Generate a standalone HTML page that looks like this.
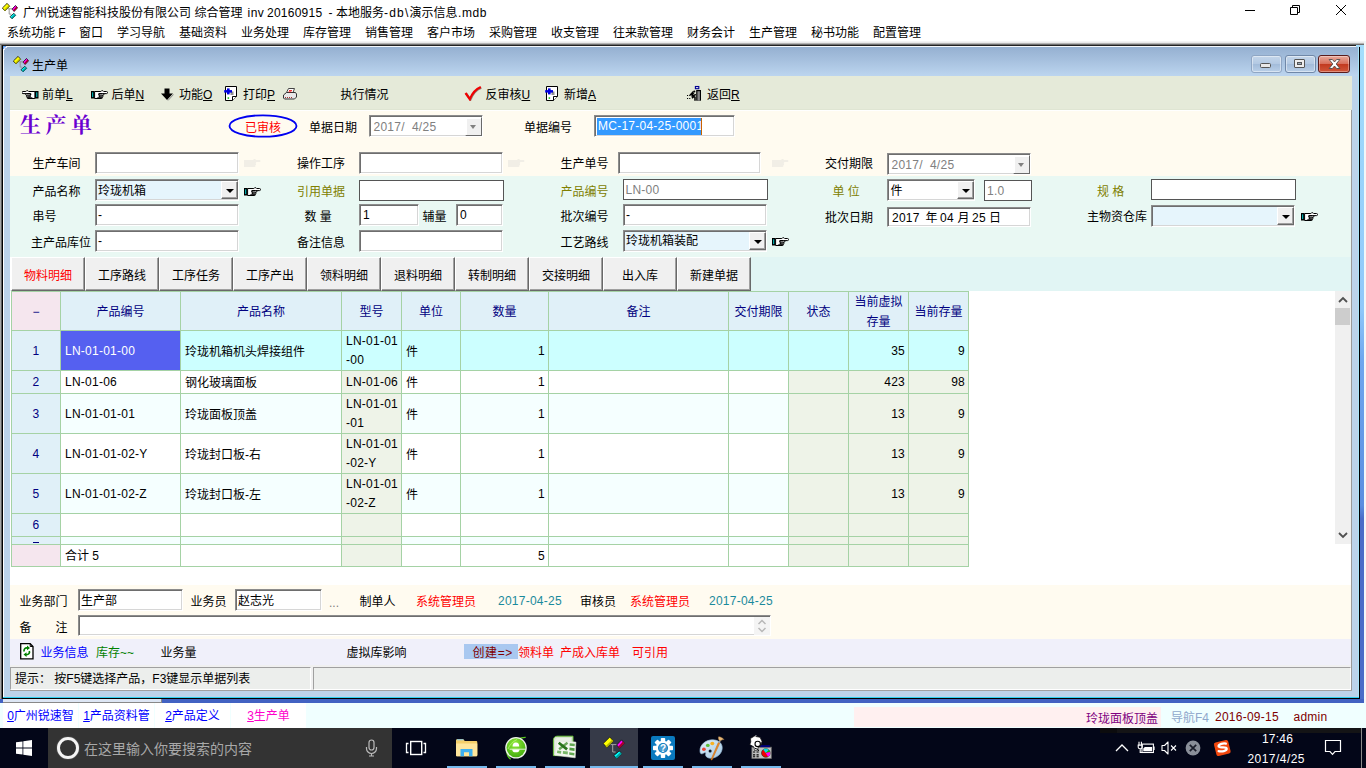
<!DOCTYPE html>
<html lang="zh-CN"><head><meta charset="utf-8"><title>生产单</title>
<style>
*{box-sizing:border-box;margin:0;padding:0}
html,body{width:1366px;height:768px;overflow:hidden;background:#fff}
body{position:relative;font-family:"Liberation Sans","Noto Sans CJK SC",sans-serif;font-size:12px;color:#000}
div,svg,span.a{position:absolute}
.t{white-space:nowrap;font-size:12px}
.ar{white-space:nowrap;font-size:12px;font-family:"Liberation Sans","Noto Sans CJK SC",sans-serif;letter-spacing:.25px}
u{text-decoration:underline}
.in{background:#fff;border:1px solid;border-color:#8c8c8c #fff #fff #8c8c8c;box-shadow:inset 1px 1px 0 #6e6e6e,inset -1px -1px 0 #d6d6d6}
.fl{background:#fff;border:1px solid #555}
.cb{background:#f0f0f0;border:1px solid;border-color:#fff #696969 #696969 #fff;box-shadow:inset -1px -1px 0 #a0a0a0}
  .cb:after{content:"";position:absolute;left:4px;top:7px;border:4px solid transparent;border-top:4px solid #000;border-bottom:0}
.tb{background:#f0f0f0;border:1px solid;border-color:#fff #696969 #696969 #fff;box-shadow:inset -1px -1px 0 #a0a0a0;text-align:center;line-height:37px;white-space:nowrap}
.ol{color:#808000}
.rd{color:#f00}
</style></head>
<body>
<svg style="left:2px;top:3px" width="16" height="16" viewBox="0.700 2.500 22.300 22.300"><path d="M8.500 10.600H14.700M10.700 10.600V18H13.600" fill="none" stroke="#909090" stroke-width="1.300"/><g stroke="#111" stroke-width="1.100" stroke-linejoin="round"><path d="M7.800 3l3.600 4-6.600 6.600L1.200 9.500z" fill="#ffff00"/><path d="M11.400 7l-6.600 6.600-1.200-1.300 6.600-6.600z" fill="#b4b400" stroke="none"/><path d="M19.500 5.900l2.900 3.300-4.800 5.100L14.700 11z" fill="#ff00ff"/><path d="M22.400 9.200l-4.800 5.100-1.450-1.650 4.800-5.100z" fill="#a80028" stroke="none"/><path d="M17.300 16.900l2.500 2.900-5.100 4.700-2.900-2.900z" fill="#00ffff"/><path d="M19.800 19.800l-5.100 4.700-1.450-1.450 5.100-4.700z" fill="#00a0a0" stroke="none"/></g></svg>
<div class="t" style="left:23px;top:5.0px;height:16px;line-height:16px;">广州锐速智能科技股份有限公司</div>
<div class="t" style="left:194.5px;top:5.0px;height:16px;line-height:16px;">综合管理</div>
<div class="t" style="left:247.5px;top:5.0px;height:16px;line-height:16px;letter-spacing:.5px">inv</div>
<div class="t" style="left:267px;top:5.0px;height:16px;line-height:16px;letter-spacing:.25px">20160915</div>
<div class="t" style="left:328.5px;top:5.0px;height:16px;line-height:16px;">-</div>
<div class="t" style="left:336px;top:5.0px;height:16px;line-height:16px;">本地服务</div>
<div class="t" style="left:384px;top:5.0px;height:16px;line-height:16px;letter-spacing:1.2px">-db\</div>
<div class="t" style="left:409.5px;top:5.0px;height:16px;line-height:16px;">演示信息</div>
<div class="t" style="left:458px;top:5.0px;height:16px;line-height:16px;letter-spacing:.6px">.mdb</div>
<svg style="left:1230px;top:0" width="136" height="22" viewBox="0 0 136 22"><g fill="none" stroke="#000" stroke-width="1"><path d="M15 10.5h10"/><path d="M60.5 7.5h7v7h-7zM62.5 7.5v-2h7v7h-2"/><path d="M106 5l10 10M116 5l-10 10"/></g></svg>
<div class="t" style="left:7px;top:25.4px;height:16px;line-height:16px;">系统功能 F</div>
<div class="t" style="left:79px;top:25.4px;height:16px;line-height:16px;">窗口</div>
<div class="t" style="left:117px;top:25.4px;height:16px;line-height:16px;">学习导航</div>
<div class="t" style="left:179px;top:25.4px;height:16px;line-height:16px;">基础资料</div>
<div class="t" style="left:241px;top:25.4px;height:16px;line-height:16px;">业务处理</div>
<div class="t" style="left:303px;top:25.4px;height:16px;line-height:16px;">库存管理</div>
<div class="t" style="left:365px;top:25.4px;height:16px;line-height:16px;">销售管理</div>
<div class="t" style="left:427px;top:25.4px;height:16px;line-height:16px;">客户市场</div>
<div class="t" style="left:489px;top:25.4px;height:16px;line-height:16px;">采购管理</div>
<div class="t" style="left:551px;top:25.4px;height:16px;line-height:16px;">收支管理</div>
<div class="t" style="left:613px;top:25.4px;height:16px;line-height:16px;">往来款管理</div>
<div class="t" style="left:687px;top:25.4px;height:16px;line-height:16px;">财务会计</div>
<div class="t" style="left:749px;top:25.4px;height:16px;line-height:16px;">生产管理</div>
<div class="t" style="left:811px;top:25.4px;height:16px;line-height:16px;">秘书功能</div>
<div class="t" style="left:873px;top:25.4px;height:16px;line-height:16px;">配置管理</div>
<div style="left:0px;top:41px;width:1366px;height:1px;background:#f4f4f4"></div>
<div style="left:0px;top:42px;width:1366px;height:1px;background:#eaeaea"></div>
<div style="left:0px;top:43px;width:1366px;height:1px;background:#b4b4b4"></div>
<div style="left:0px;top:44px;width:1366px;height:659px;background:#bcd3ea"></div>
<div style="left:0px;top:44px;width:1364px;height:1px;background:#707070"></div>
<div style="left:0px;top:45px;width:1357px;height:1px;background:#222"></div>
<div style="left:0px;top:45px;width:1px;height:658px;background:#a8a8a8"></div>
<div style="left:1px;top:45px;width:1px;height:658px;background:#606060"></div>
<div style="left:2px;top:45px;width:1px;height:654px;background:#000"></div>
<div style="left:3px;top:46px;width:1px;height:651px;background:#fff"></div>
<div style="left:1358px;top:47px;width:1px;height:650px;background:#a8e4f8"></div>
<div style="left:1359px;top:47px;width:1px;height:652px;background:#000"></div>
<div style="left:1360px;top:45px;width:4px;height:658px;background:linear-gradient(#a4defc,#90c8fa 40%,#6ea6ee 48%,#5a8ee0 70%,#4a6cc8 72%,#4a6cc8)"></div>
<div style="left:1364px;top:41px;width:2px;height:662px;background:#f2f6f8"></div>
<div style="left:1356px;top:45px;width:3px;height:2px;background:#a4defc"></div>
<div style="left:3px;top:697px;width:1356px;height:1px;background:#30d0f0"></div>
<div style="left:2px;top:698px;width:1358px;height:1px;background:#000"></div>
<div style="left:0px;top:699px;width:1364px;height:4px;background:#4262c2"></div>
<div style="left:3px;top:699px;width:159px;height:4px;background:#dde6f4;border-bottom:1px solid #888;border-right:1px solid #888"></div>
<div style="left:4px;top:47px;width:1354px;height:29px;background:linear-gradient(#95b0d1,#a6c0de 45%,#bcd5ef)"></div>
<div style="left:4px;top:46px;width:1352px;height:1px;background:#f4f8fc"></div>
<div style="left:2px;top:45px;width:4px;height:4px;background:#5e9ef0;border-top:1px solid #222;border-left:1px solid #000"></div>
<div style="left:4px;top:47px;width:3px;height:3px;background:#9bb5d5;border-top:1px solid #eef;border-left:1px solid #eef;border-radius:2px 0 0 0"></div>
<svg style="left:12.5px;top:56px" width="16" height="16" viewBox="0.700 2.500 22.300 22.300"><path d="M8.500 10.600H14.700M10.700 10.600V18H13.600" fill="none" stroke="#909090" stroke-width="1.300"/><g stroke="#111" stroke-width="1.100" stroke-linejoin="round"><path d="M7.800 3l3.600 4-6.600 6.600L1.200 9.500z" fill="#ffff00"/><path d="M11.400 7l-6.600 6.600-1.200-1.300 6.600-6.600z" fill="#b4b400" stroke="none"/><path d="M19.500 5.900l2.900 3.300-4.800 5.100L14.700 11z" fill="#ff00ff"/><path d="M22.400 9.200l-4.800 5.100-1.450-1.650 4.800-5.100z" fill="#a80028" stroke="none"/><path d="M17.300 16.900l2.500 2.900-5.100 4.700-2.900-2.900z" fill="#00ffff"/><path d="M19.800 19.800l-5.100 4.700-1.450-1.450 5.100-4.700z" fill="#00a0a0" stroke="none"/></g></svg>
<div class="t" style="left:32px;top:57.5px;height:16px;line-height:16px;">生产单</div>
<div style="left:1250.5px;top:55px;width:31px;height:18px;border:1px solid #8fa6c4;border-radius:3px;background:linear-gradient(#c4d6ea,#b3c9e3 48%,#a3bcda 52%,#b9cfe8);box-shadow:inset 0 0 0 1px rgba(255,255,255,.45)"></div>
<div style="left:1260px;top:63px;width:11px;height:5px;border:1px solid #555;border-radius:1.500px;background:#e8e8e8"></div>
<div style="left:1284.5px;top:55px;width:31px;height:18px;border:1px solid #7088a8;border-radius:3px;background:linear-gradient(#c4d6ea,#b3c9e3 48%,#a3bcda 52%,#b9cfe8);box-shadow:inset 0 0 0 1px rgba(255,255,255,.45)"></div>
<div style="left:1294px;top:59px;width:11px;height:9px;border:1px solid #555;border-radius:1px;background:#eee"></div>
<div style="left:1297px;top:62px;width:5px;height:3px;border:1px solid #555;background:#9ab"></div>
<div style="left:1318px;top:55px;width:32px;height:18px;border:1px solid #5a1c1c;border-radius:3px;background:linear-gradient(#e9a99b,#d8705c 48%,#c23a20 52%,#d0563a);box-shadow:inset 0 0 0 1px rgba(255,255,255,.35)"></div>
<svg style="left:1326.500px;top:58px" width="15" height="12" viewBox="0 0 14 12" preserveAspectRatio="none"><path d="M2 1.5h3l2 2.5 2-2.5h3L8.6 6 12 10.5H9L7 8l-2 2.5H2L5.4 6z" fill="#fff" stroke="#444" stroke-width=".8"/></svg>
<div style="left:10px;top:76px;width:1342px;height:34px;background:#e5ead9;border-bottom:1px solid #dfe5d3"></div>
<div style="left:10px;top:110px;width:1341px;height:1px;background:#fff"></div>
<div style="left:10px;top:111px;width:1341px;height:65px;background:#fffbf0"></div>
<div style="left:10px;top:176px;width:1341px;height:81px;background:#e9f8f3"></div>
<div style="left:10px;top:257px;width:1341px;height:34px;background:#e1f5f4"></div>
<div style="left:10px;top:291px;width:1341px;height:294px;background:#fff"></div>
<div style="left:10px;top:585px;width:1341px;height:54px;background:#fffbf0"></div>
<div style="left:10px;top:639px;width:1341px;height:26px;background:#f0f0fa"></div>
<div style="left:10px;top:665px;width:1342px;height:25px;background:#f0f0f0"></div>
<div style="left:10px;top:690px;width:1342px;height:1px;background:#a0a0a0"></div>
<div style="left:1351px;top:110px;width:1px;height:580px;background:#9a9a9a"></div>
<svg style="left:22px;top:89.5px" width="17" height="10" viewBox="0 0 17 10"><g transform="translate(16.500,0) scale(-1,1)"><rect x="0" y="1" width="3.600" height="7.500" fill="#000"/><rect x="1.200" y="2.300" width="1" height="4.800" fill="#00d0d0"/><path d="M3.600 1.500H9.800c.6-1.100 2.300-1.100 2.900 0h2.800c1.500 0 1.500 2.100 0 2.100H11.800c1.400 0 1.400 1.700 0 1.700h-.6c1.300 0 1.300 1.600 0 1.600h-.7c1.200 0 1.200 1.600 0 1.600H3.600z" fill="#fff" stroke="#000" stroke-width="1" stroke-linejoin="round"/><path d="M8.300 3.600h3.500M8.800 5.300h2.400M8.800 6.900h1.700M8.300 3.600c-.9 0-.9 1.700.5 1.700M8.800 5.300c-.9 0-.9 1.600 0 1.600" fill="none" stroke="#000" stroke-width="1.100"/><path d="M4.500 8.500h6l.8-1.200H7z" fill="#000"/></g></svg>
<div class="t" style="left:42px;top:87.0px;height:16px;line-height:16px;">前单<u>L</u></div>
<svg style="left:91px;top:89.5px" width="17" height="10" viewBox="0 0 17 10"><rect x="0" y="1" width="3.600" height="7.500" fill="#000"/><rect x="1.200" y="2.300" width="1" height="4.800" fill="#00d0d0"/><path d="M3.600 1.500H9.800c.6-1.100 2.300-1.100 2.900 0h2.800c1.500 0 1.500 2.100 0 2.100H11.800c1.400 0 1.400 1.700 0 1.700h-.6c1.300 0 1.300 1.600 0 1.600h-.7c1.200 0 1.200 1.600 0 1.600H3.600z" fill="#fff" stroke="#000" stroke-width="1" stroke-linejoin="round"/><path d="M8.300 3.600h3.500M8.800 5.300h2.400M8.800 6.900h1.700M8.300 3.600c-.9 0-.9 1.700.5 1.700M8.800 5.300c-.9 0-.9 1.600 0 1.600" fill="none" stroke="#000" stroke-width="1.100"/><path d="M4.500 8.500h6l.8-1.200H7z" fill="#000"/></svg>
<div class="t" style="left:111.5px;top:87.0px;height:16px;line-height:16px;">后单<u>N</u></div>
<svg style="left:160px;top:88px" width="14" height="13" viewBox="0 0 14 13"><path d="M4.500 .5h5v5h3.500L7 12 1 5.500h3.500z" fill="#000"/><path d="M8 12.500l5.500-6" stroke="#888" stroke-width="1" fill="none"/></svg>
<div class="t" style="left:179px;top:87.0px;height:16px;line-height:16px;">功能<u>O</u></div>
<svg style="left:223px;top:86px" width="15" height="16" viewBox="0 0 15 16"><path d="M2.500 .5H13.500V10.500L9.500 14.500H2.500Z" fill="#fff" stroke="#000" stroke-width="1"/><path d="M9.500 14.500V10.500H13.500" fill="#fff" stroke="#000" stroke-width="1"/><rect x="7.500" y="5.500" width="3" height="3.500" fill="#909090"/><rect x="4" y="2.400" width="2.600" height="6" fill="#0000e0"/><rect x="1.200" y="4.100" width="7.800" height="2.500" fill="#0000e0"/><rect x="4.600" y="11.300" width="1.500" height="1.500" fill="#00c000"/></svg>
<div class="t" style="left:243px;top:87.0px;height:16px;line-height:16px;">打印<u>P</u></div>
<svg style="left:282px;top:88px" width="16" height="12" viewBox="0 0 16 12"><path d="M4.500 4.500l2-4h6l-1.500 4" fill="#fff" stroke="#444" stroke-width="1"/><path d="M1.500 7l3-2.500h9l1 1.500v3l-2 2h-10l-1-1z" fill="#e8e8e8" stroke="#333" stroke-width="1"/><path d="M7 2.500h3M6.500 3.800h3" stroke="#e00" stroke-width=".8"/><path d="M3 9.500h8" stroke="#a33" stroke-width="1" stroke-dasharray="1 1"/></svg>
<div class="t" style="left:340.5px;top:87.0px;height:16px;line-height:16px;">执行情况</div>
<svg style="left:464px;top:86px" width="18" height="15" viewBox="0 0 18 15"><path d="M2.300 7.700l4.200 5.800C8.800 8 12.500 3.500 17.300 1.800" fill="none" stroke="#400" stroke-width="2" opacity=".5"/><path d="M1.500 7l4.300 6.200C8 7.500 12 3 16.800 1" fill="none" stroke="#f00000" stroke-width="2.200"/></svg>
<div class="t" style="left:485.5px;top:87.0px;height:16px;line-height:16px;">反审核<u>U</u></div>
<svg style="left:543.5px;top:86px" width="15" height="16" viewBox="0 0 15 16"><path d="M2.500 .5H13.500V10.500L9.500 14.500H2.500Z" fill="#fff" stroke="#000" stroke-width="1"/><path d="M9.500 14.500V10.500H13.500" fill="#fff" stroke="#000" stroke-width="1"/><rect x="7.500" y="5.500" width="3" height="3.500" fill="#909090"/><rect x="4" y="2.400" width="2.600" height="6" fill="#0000e0"/><rect x="1.200" y="4.100" width="7.800" height="2.500" fill="#0000e0"/><rect x="4.600" y="11.300" width="1.500" height="1.500" fill="#00c000"/></svg>
<div class="t" style="left:564px;top:87.0px;height:16px;line-height:16px;">新增<u>A</u></div>
<svg style="left:686px;top:85px" width="16" height="17" viewBox="0 0 16 17"><rect x="9.400" y="1.500" width="3.400" height="2.200" fill="#dde" stroke="#000090" stroke-width="1.100"/><rect x="10.200" y="5" width="4.800" height="10.700" fill="#000"/><rect x="11.400" y="6.200" width="2.500" height="9.500" fill="#8a8a8a"/><path d="M7.500 6.600l-2 2.200 2.400 2-1.800 2.400M7.500 8l-1.500 3 3 1.300v3.500M5.500 8.800l-1.500 1.300M8.300 9.500l1.500.5" fill="none" stroke="#000" stroke-width="1.500"/><circle cx="8.300" cy="6.500" r="1.100" fill="#000"/><path d="M1 10.500h3.500M1 13.500h3.500" stroke="#000" stroke-width="1.100" stroke-dasharray="1.100 1.100"/></svg>
<div class="t" style="left:707px;top:87.0px;height:16px;line-height:16px;">返回<u>R</u></div>
<div class="t" style="left:20px;top:110px;height:30px;line-height:30px;font-family:'Liberation Serif','Noto Serif CJK SC',serif;font-size:21px;font-weight:700;color:#6a00d0;letter-spacing:4.5px">生产单</div>
<svg style="left:228px;top:114px" width="70" height="24" viewBox="0 0 70 24"><ellipse cx="35" cy="12" rx="33.500" ry="10.700" fill="none" stroke="#0000f0" stroke-width="1.800"/></svg>
<div class="t" style="left:245px;top:120.0px;height:16px;line-height:16px;color:#f00">已审核</div>
<div class="t" style="left:309px;top:120.0px;height:16px;line-height:16px;">单据日期</div>
<div class="in" style="left:369px;top:115px;width:114px;height:22px;"></div>
<div style="left:465px;top:117px;width:17px;height:19px;background:#f0f0f0;border:1px solid;border-color:#fff #696969 #696969 #fff;box-shadow:inset 1px 1px 0 #fff"></div>
<div style="left:470px;top:125.0px;border:3.500px solid transparent;border-top:4px solid #808080;border-bottom:0;width:0;height:0"></div>
<div class="ar" style="left:373.5px;top:118.5px;height:16px;line-height:16px;color:#808080;white-space:pre">2017/  4/25</div>
<div class="t" style="left:524px;top:120.0px;height:16px;line-height:16px;">单据编号</div>
<div class="in" style="left:594px;top:115px;width:141px;height:22px;"></div>
<div style="left:597px;top:118px;width:105px;height:17px;background:#3399ff"></div>
<div class="ar" style="left:598px;top:118.0px;height:16px;line-height:16px;color:#fff">MC-17-04-25-0001</div>
<div style="left:701px;top:118px;width:1px;height:17px;background:#c86400"></div>
<div class="t" style="left:32.5px;top:156.0px;height:16px;line-height:16px;">生产车间</div>
<div class="in" style="left:95px;top:152px;width:144px;height:22px;"></div>
<svg style="left:244px;top:157.5px" width="17" height="10" viewBox="0 0 17 10"><path d="M0 2h9c.8-1.200 2.500-1.200 3 0h3.500c1.300 0 1.300 2 0 2H11.500c1 0 1 1.700 0 1.700 .9 0 .9 1.600-.5 1.600 .8 0 .8 1.600-.5 1.600H0z" fill="#f1eee6"/></svg>
<div class="t" style="left:32.5px;top:184.0px;height:16px;line-height:16px;">产品名称</div>
<div class="in" style="left:95px;top:179px;width:144px;height:22px;background:#e6f5fc"></div>
<div class="cb" style="left:221px;top:181px;width:17px;height:18px;"></div>
<div class="t" style="left:98px;top:183.0px;height:16px;line-height:16px;">玲珑机箱</div>
<svg style="left:244px;top:186.5px" width="17" height="10" viewBox="0 0 17 10"><rect x="0" y="1" width="3.600" height="7.500" fill="#000"/><rect x="1.200" y="2.300" width="1" height="4.800" fill="#00d0d0"/><path d="M3.600 1.500H9.800c.6-1.100 2.300-1.100 2.900 0h2.800c1.500 0 1.500 2.100 0 2.100H11.800c1.400 0 1.400 1.700 0 1.700h-.6c1.300 0 1.300 1.600 0 1.600h-.7c1.200 0 1.200 1.600 0 1.600H3.600z" fill="#fff" stroke="#000" stroke-width="1" stroke-linejoin="round"/><path d="M8.300 3.600h3.500M8.800 5.300h2.400M8.800 6.900h1.700M8.300 3.600c-.9 0-.9 1.700.5 1.700M8.800 5.300c-.9 0-.9 1.600 0 1.600" fill="none" stroke="#000" stroke-width="1.100"/><path d="M4.500 8.500h6l.8-1.200H7z" fill="#000"/></svg>
<div class="t" style="left:32.5px;top:209.0px;height:16px;line-height:16px;">串号</div>
<div class="in" style="left:95px;top:204px;width:144px;height:22px;"></div>
<div class="t" style="left:98px;top:207.0px;height:16px;line-height:16px;">-</div>
<div class="t" style="left:31px;top:234.5px;height:16px;line-height:16px;">主产品库位</div>
<div class="in" style="left:95px;top:230px;width:144px;height:22px;"></div>
<div class="t" style="left:98px;top:233.0px;height:16px;line-height:16px;">-</div>
<div class="t" style="left:297px;top:156.0px;height:16px;line-height:16px;">操作工序</div>
<div class="in" style="left:359px;top:152px;width:144px;height:22px;"></div>
<svg style="left:508px;top:157.5px" width="17" height="10" viewBox="0 0 17 10"><path d="M0 2h9c.8-1.200 2.500-1.200 3 0h3.500c1.300 0 1.300 2 0 2H11.500c1 0 1 1.700 0 1.700 .9 0 .9 1.600-.5 1.600 .8 0 .8 1.600-.5 1.600H0z" fill="#f1eee6"/></svg>
<div class="t ol" style="left:297px;top:184.0px;height:16px;line-height:16px;">引用单据</div>
<div class="fl" style="left:359px;top:180px;width:145px;height:21px;"></div>
<div class="t" style="left:304.5px;top:209.0px;height:16px;line-height:16px;">数 量</div>
<div class="in" style="left:359px;top:204px;width:60px;height:22px;"></div>
<div class="ar" style="left:363px;top:207.0px;height:16px;line-height:16px;">1</div>
<div class="t" style="left:422.5px;top:209.0px;height:16px;line-height:16px;">辅量</div>
<div class="in" style="left:456px;top:204px;width:47px;height:22px;"></div>
<div class="ar" style="left:460px;top:207.0px;height:16px;line-height:16px;">0</div>
<div class="t" style="left:297px;top:234.5px;height:16px;line-height:16px;">备注信息</div>
<div class="in" style="left:359px;top:230px;width:144px;height:22px;"></div>
<div class="t" style="left:560.5px;top:156.0px;height:16px;line-height:16px;">生产单号</div>
<div class="in" style="left:618px;top:152px;width:143px;height:22px;"></div>
<svg style="left:772px;top:157.5px" width="17" height="10" viewBox="0 0 17 10"><path d="M0 2h9c.8-1.200 2.500-1.200 3 0h3.500c1.300 0 1.300 2 0 2H11.500c1 0 1 1.700 0 1.700 .9 0 .9 1.600-.5 1.600 .8 0 .8 1.600-.5 1.600H0z" fill="#f1eee6"/></svg>
<div class="t ol" style="left:560.5px;top:184.0px;height:16px;line-height:16px;">产品编号</div>
<div class="fl" style="left:623px;top:179px;width:145px;height:21px;"></div>
<div class="ar" style="left:625.5px;top:182.0px;height:16px;line-height:16px;color:#808080">LN-00</div>
<div class="t" style="left:560.5px;top:209.0px;height:16px;line-height:16px;">批次编号</div>
<div class="in" style="left:623px;top:204px;width:144px;height:22px;"></div>
<div class="t" style="left:626px;top:207.0px;height:16px;line-height:16px;">-</div>
<div class="t" style="left:560.5px;top:234.5px;height:16px;line-height:16px;">工艺路线</div>
<div class="in" style="left:623px;top:230px;width:144px;height:22px;background:#e6f5fc"></div>
<div class="cb" style="left:749px;top:232px;width:17px;height:18px;"></div>
<div class="t" style="left:626px;top:233.0px;height:16px;line-height:16px;">玲珑机箱装配</div>
<svg style="left:772px;top:236.5px" width="17" height="10" viewBox="0 0 17 10"><rect x="0" y="1" width="3.600" height="7.500" fill="#000"/><rect x="1.200" y="2.300" width="1" height="4.800" fill="#00d0d0"/><path d="M3.600 1.500H9.800c.6-1.100 2.300-1.100 2.900 0h2.800c1.500 0 1.500 2.100 0 2.100H11.800c1.400 0 1.400 1.700 0 1.700h-.6c1.300 0 1.300 1.600 0 1.600h-.7c1.200 0 1.200 1.600 0 1.600H3.600z" fill="#fff" stroke="#000" stroke-width="1" stroke-linejoin="round"/><path d="M8.300 3.600h3.500M8.800 5.300h2.400M8.800 6.900h1.700M8.300 3.600c-.9 0-.9 1.700.5 1.700M8.800 5.300c-.9 0-.9 1.600 0 1.600" fill="none" stroke="#000" stroke-width="1.100"/><path d="M4.500 8.500h6l.8-1.200H7z" fill="#000"/></svg>
<div class="t" style="left:825px;top:156.0px;height:16px;line-height:16px;">交付期限</div>
<div class="in" style="left:887px;top:153px;width:144px;height:22px;"></div>
<div style="left:1013px;top:155px;width:17px;height:19px;background:#f0f0f0;border:1px solid;border-color:#fff #696969 #696969 #fff;box-shadow:inset 1px 1px 0 #fff"></div>
<div style="left:1018px;top:163.0px;border:3.500px solid transparent;border-top:4px solid #808080;border-bottom:0;width:0;height:0"></div>
<div class="ar" style="left:891.5px;top:156.5px;height:16px;line-height:16px;color:#808080;white-space:pre">2017/  4/25</div>
<div class="t ol" style="left:832.5px;top:184.0px;height:16px;line-height:16px;">单 位</div>
<div class="in" style="left:887px;top:179px;width:88px;height:22px;"></div>
<div class="cb" style="left:957px;top:181px;width:17px;height:18px;"></div>
<div class="t" style="left:890.5px;top:183.0px;height:16px;line-height:16px;">件</div>
<div class="fl" style="left:984px;top:180px;width:48px;height:21px;"></div>
<div class="ar" style="left:987px;top:182.5px;height:16px;line-height:16px;color:#808080">1.0</div>
<div class="t" style="left:825px;top:209.5px;height:16px;line-height:16px;">批次日期</div>
<div class="in" style="left:887px;top:207px;width:144px;height:20px;"></div>
<div class="ar" style="left:892px;top:209.5px;height:16px;line-height:16px;">2017</div>
<div class="ar" style="left:925.5px;top:209.5px;height:16px;line-height:16px;">年</div>
<div class="ar" style="left:940px;top:209.5px;height:16px;line-height:16px;">04</div>
<div class="ar" style="left:957.5px;top:209.5px;height:16px;line-height:16px;">月</div>
<div class="ar" style="left:972px;top:209.5px;height:16px;line-height:16px;">25</div>
<div class="ar" style="left:989px;top:209.5px;height:16px;line-height:16px;">日</div>
<div class="t ol" style="left:1097px;top:184.0px;height:16px;line-height:16px;">规 格</div>
<div class="fl" style="left:1151px;top:179px;width:145px;height:21px;"></div>
<div class="t" style="left:1087px;top:209.0px;height:16px;line-height:16px;">主物资仓库</div>
<div class="in" style="left:1151px;top:205px;width:144px;height:22px;background:#e6f5fc"></div>
<div class="cb" style="left:1277px;top:207px;width:17px;height:18px;"></div>
<svg style="left:1301px;top:211.5px" width="17" height="10" viewBox="0 0 17 10"><rect x="0" y="1" width="3.600" height="7.500" fill="#000"/><rect x="1.200" y="2.300" width="1" height="4.800" fill="#00d0d0"/><path d="M3.600 1.500H9.800c.6-1.100 2.300-1.100 2.900 0h2.800c1.500 0 1.500 2.100 0 2.100H11.800c1.400 0 1.400 1.700 0 1.700h-.6c1.300 0 1.300 1.600 0 1.600h-.7c1.200 0 1.200 1.600 0 1.600H3.600z" fill="#fff" stroke="#000" stroke-width="1" stroke-linejoin="round"/><path d="M8.300 3.600h3.500M8.800 5.300h2.400M8.800 6.900h1.700M8.300 3.600c-.9 0-.9 1.700.5 1.700M8.800 5.300c-.9 0-.9 1.600 0 1.600" fill="none" stroke="#000" stroke-width="1.100"/><path d="M4.500 8.500h6l.8-1.200H7z" fill="#000"/></svg>
<div style="left:10px;top:257px;width:1px;height:33px;background:#fff"></div>
<div class="tb" style="left:11px;top:257px;width:74px;height:34px;color:#f00">物料明细</div>
<div class="tb" style="left:85px;top:257px;width:74px;height:34px;">工序路线</div>
<div class="tb" style="left:159px;top:257px;width:74px;height:34px;">工序任务</div>
<div class="tb" style="left:233px;top:257px;width:74px;height:34px;">工序产出</div>
<div class="tb" style="left:307px;top:257px;width:74px;height:34px;">领料明细</div>
<div class="tb" style="left:381px;top:257px;width:74px;height:34px;">退料明细</div>
<div class="tb" style="left:455px;top:257px;width:74px;height:34px;">转制明细</div>
<div class="tb" style="left:529px;top:257px;width:74px;height:34px;">交接明细</div>
<div class="tb" style="left:603px;top:257px;width:74px;height:34px;">出入库</div>
<div class="tb" style="left:677px;top:257px;width:74px;height:34px;">新建单据</div>
<div style="left:12px;top:291px;width:48px;height:39px;background:#f5e6ee;color:#000080;text-align:center;line-height:43px;white-space:nowrap;">−</div>
<div style="left:61px;top:291px;width:119px;height:39px;background:#e0f0f8;color:#000080;text-align:center;line-height:43px;white-space:nowrap;">产品编号</div>
<div style="left:181px;top:291px;width:160px;height:39px;background:#e0f0f8;color:#000080;text-align:center;line-height:43px;white-space:nowrap;">产品名称</div>
<div style="left:342px;top:291px;width:59px;height:39px;background:#e0f0f8;color:#000080;text-align:center;line-height:43px;white-space:nowrap;">型号</div>
<div style="left:402px;top:291px;width:58px;height:39px;background:#e0f0f8;color:#000080;text-align:center;line-height:43px;white-space:nowrap;">单位</div>
<div style="left:461px;top:291px;width:87px;height:39px;background:#e0f0f8;color:#000080;text-align:center;line-height:43px;white-space:nowrap;">数量</div>
<div style="left:549px;top:291px;width:179px;height:39px;background:#e0f0f8;color:#000080;text-align:center;line-height:43px;white-space:nowrap;">备注</div>
<div style="left:729px;top:291px;width:59px;height:39px;background:#e0f0f8;color:#000080;text-align:center;line-height:43px;white-space:nowrap;">交付期限</div>
<div style="left:789px;top:291px;width:59px;height:39px;background:#e0f0f8;color:#000080;text-align:center;line-height:43px;white-space:nowrap;">状态</div>
<div style="left:849px;top:291px;width:59px;height:39px;background:#e0f0f8;color:#000080;text-align:center;line-height:20px;white-space:nowrap;padding-top:1px;">当前虚拟<br>存量</div>
<div style="left:909px;top:291px;width:59px;height:39px;background:#e0f0f8;color:#000080;text-align:center;line-height:43px;white-space:nowrap;">当前存量</div>
<div class="ar" style="left:12px;top:331px;width:48px;height:39px;background:#e0f0f8;overflow:hidden;color:#000080;text-align:center;line-height:41px;">1</div>
<div class="ar" style="left:61px;top:331px;width:119px;height:39px;background:#5560f0;color:#fff;padding-left:4px;line-height:41px;">LN-01-01-00</div>
<div class="t" style="left:181px;top:331px;width:160px;height:39px;background:#ccffff;overflow:hidden;padding-left:4px;line-height:43px;">玲珑机箱机头焊接组件</div>
<div class="ar" style="left:342px;top:331px;width:59px;height:39px;background:#ccffff;overflow:hidden;padding-left:4px;line-height:19px;padding-top:0.5px;">LN-01-01<br>-00</div>
<div class="t" style="left:402px;top:331px;width:58px;height:39px;background:#ccffff;overflow:hidden;padding-left:4px;line-height:43px;">件</div>
<div class="ar" style="left:461px;top:331px;width:87px;height:39px;background:#ccffff;overflow:hidden;text-align:right;padding-right:3px;line-height:41px;">1</div>
<div class="t" style="left:549px;top:331px;width:179px;height:39px;background:#ccffff;overflow:hidden;padding-left:4px;line-height:43px;"></div>
<div class="t" style="left:729px;top:331px;width:59px;height:39px;background:#ccffff;overflow:hidden;padding-left:4px;line-height:43px;"></div>
<div class="t" style="left:789px;top:331px;width:59px;height:39px;background:#ccffff;overflow:hidden;padding-left:4px;line-height:43px;"></div>
<div class="ar" style="left:849px;top:331px;width:59px;height:39px;background:#ccffff;overflow:hidden;text-align:right;padding-right:3px;line-height:41px;">35</div>
<div class="ar" style="left:909px;top:331px;width:59px;height:39px;background:#ccffff;overflow:hidden;text-align:right;padding-right:3px;line-height:41px;">9</div>
<div class="ar" style="left:12px;top:371px;width:48px;height:22px;background:#e0f0f8;overflow:hidden;color:#000080;text-align:center;line-height:22px;">2</div>
<div class="ar" style="left:61px;top:371px;width:119px;height:22px;background:#fff;overflow:hidden;padding-left:4px;line-height:22px;">LN-01-06</div>
<div class="t" style="left:181px;top:371px;width:160px;height:22px;background:#fff;overflow:hidden;padding-left:4px;line-height:24px;">钢化玻璃面板</div>
<div class="ar" style="left:342px;top:371px;width:59px;height:22px;background:#eef3e8;overflow:hidden;padding-left:4px;line-height:22px;">LN-01-06</div>
<div class="t" style="left:402px;top:371px;width:58px;height:22px;background:#fff;overflow:hidden;padding-left:4px;line-height:24px;">件</div>
<div class="ar" style="left:461px;top:371px;width:87px;height:22px;background:#fff;overflow:hidden;text-align:right;padding-right:3px;line-height:22px;">1</div>
<div class="t" style="left:549px;top:371px;width:179px;height:22px;background:#fff;overflow:hidden;padding-left:4px;line-height:24px;"></div>
<div class="t" style="left:729px;top:371px;width:59px;height:22px;background:#fff;overflow:hidden;padding-left:4px;line-height:24px;"></div>
<div class="t" style="left:789px;top:371px;width:59px;height:22px;background:#eef3e8;overflow:hidden;padding-left:4px;line-height:24px;"></div>
<div class="ar" style="left:849px;top:371px;width:59px;height:22px;background:#eef3e8;overflow:hidden;text-align:right;padding-right:3px;line-height:22px;">423</div>
<div class="ar" style="left:909px;top:371px;width:59px;height:22px;background:#eef3e8;overflow:hidden;text-align:right;padding-right:3px;line-height:22px;">98</div>
<div class="ar" style="left:12px;top:394px;width:48px;height:39px;background:#e0f0f8;overflow:hidden;color:#000080;text-align:center;line-height:41px;">3</div>
<div class="ar" style="left:61px;top:394px;width:119px;height:39px;background:#f5ffff;overflow:hidden;padding-left:4px;line-height:41px;">LN-01-01-01</div>
<div class="t" style="left:181px;top:394px;width:160px;height:39px;background:#f5ffff;overflow:hidden;padding-left:4px;line-height:43px;">玲珑面板顶盖</div>
<div class="ar" style="left:342px;top:394px;width:59px;height:39px;background:#eef3e8;overflow:hidden;padding-left:4px;line-height:19px;padding-top:0.5px;">LN-01-01<br>-01</div>
<div class="t" style="left:402px;top:394px;width:58px;height:39px;background:#f5ffff;overflow:hidden;padding-left:4px;line-height:43px;">件</div>
<div class="ar" style="left:461px;top:394px;width:87px;height:39px;background:#f5ffff;overflow:hidden;text-align:right;padding-right:3px;line-height:41px;">1</div>
<div class="t" style="left:549px;top:394px;width:179px;height:39px;background:#f5ffff;overflow:hidden;padding-left:4px;line-height:43px;"></div>
<div class="t" style="left:729px;top:394px;width:59px;height:39px;background:#f5ffff;overflow:hidden;padding-left:4px;line-height:43px;"></div>
<div class="t" style="left:789px;top:394px;width:59px;height:39px;background:#eef3e8;overflow:hidden;padding-left:4px;line-height:43px;"></div>
<div class="ar" style="left:849px;top:394px;width:59px;height:39px;background:#eef3e8;overflow:hidden;text-align:right;padding-right:3px;line-height:41px;">13</div>
<div class="ar" style="left:909px;top:394px;width:59px;height:39px;background:#eef3e8;overflow:hidden;text-align:right;padding-right:3px;line-height:41px;">9</div>
<div class="ar" style="left:12px;top:434px;width:48px;height:39px;background:#e0f0f8;overflow:hidden;color:#000080;text-align:center;line-height:41px;">4</div>
<div class="ar" style="left:61px;top:434px;width:119px;height:39px;background:#fff;overflow:hidden;padding-left:4px;line-height:41px;">LN-01-01-02-Y</div>
<div class="t" style="left:181px;top:434px;width:160px;height:39px;background:#fff;overflow:hidden;padding-left:4px;line-height:43px;">玲珑封口板-右</div>
<div class="ar" style="left:342px;top:434px;width:59px;height:39px;background:#eef3e8;overflow:hidden;padding-left:4px;line-height:19px;padding-top:0.5px;">LN-01-01<br>-02-Y</div>
<div class="t" style="left:402px;top:434px;width:58px;height:39px;background:#fff;overflow:hidden;padding-left:4px;line-height:43px;">件</div>
<div class="ar" style="left:461px;top:434px;width:87px;height:39px;background:#fff;overflow:hidden;text-align:right;padding-right:3px;line-height:41px;">1</div>
<div class="t" style="left:549px;top:434px;width:179px;height:39px;background:#fff;overflow:hidden;padding-left:4px;line-height:43px;"></div>
<div class="t" style="left:729px;top:434px;width:59px;height:39px;background:#fff;overflow:hidden;padding-left:4px;line-height:43px;"></div>
<div class="t" style="left:789px;top:434px;width:59px;height:39px;background:#eef3e8;overflow:hidden;padding-left:4px;line-height:43px;"></div>
<div class="ar" style="left:849px;top:434px;width:59px;height:39px;background:#eef3e8;overflow:hidden;text-align:right;padding-right:3px;line-height:41px;">13</div>
<div class="ar" style="left:909px;top:434px;width:59px;height:39px;background:#eef3e8;overflow:hidden;text-align:right;padding-right:3px;line-height:41px;">9</div>
<div class="ar" style="left:12px;top:474px;width:48px;height:39px;background:#e0f0f8;overflow:hidden;color:#000080;text-align:center;line-height:41px;">5</div>
<div class="ar" style="left:61px;top:474px;width:119px;height:39px;background:#f5ffff;overflow:hidden;padding-left:4px;line-height:41px;">LN-01-01-02-Z</div>
<div class="t" style="left:181px;top:474px;width:160px;height:39px;background:#f5ffff;overflow:hidden;padding-left:4px;line-height:43px;">玲珑封口板-左</div>
<div class="ar" style="left:342px;top:474px;width:59px;height:39px;background:#eef3e8;overflow:hidden;padding-left:4px;line-height:19px;padding-top:0.5px;">LN-01-01<br>-02-Z</div>
<div class="t" style="left:402px;top:474px;width:58px;height:39px;background:#f5ffff;overflow:hidden;padding-left:4px;line-height:43px;">件</div>
<div class="ar" style="left:461px;top:474px;width:87px;height:39px;background:#f5ffff;overflow:hidden;text-align:right;padding-right:3px;line-height:41px;">1</div>
<div class="t" style="left:549px;top:474px;width:179px;height:39px;background:#f5ffff;overflow:hidden;padding-left:4px;line-height:43px;"></div>
<div class="t" style="left:729px;top:474px;width:59px;height:39px;background:#f5ffff;overflow:hidden;padding-left:4px;line-height:43px;"></div>
<div class="t" style="left:789px;top:474px;width:59px;height:39px;background:#eef3e8;overflow:hidden;padding-left:4px;line-height:43px;"></div>
<div class="ar" style="left:849px;top:474px;width:59px;height:39px;background:#eef3e8;overflow:hidden;text-align:right;padding-right:3px;line-height:41px;">13</div>
<div class="ar" style="left:909px;top:474px;width:59px;height:39px;background:#eef3e8;overflow:hidden;text-align:right;padding-right:3px;line-height:41px;">9</div>
<div class="ar" style="left:12px;top:514px;width:48px;height:22px;background:#e0f0f8;overflow:hidden;color:#000080;text-align:center;line-height:22px;">6</div>
<div class="ar" style="left:61px;top:514px;width:119px;height:22px;background:#fff;overflow:hidden;padding-left:4px;line-height:22px;"></div>
<div class="t" style="left:181px;top:514px;width:160px;height:22px;background:#fff;overflow:hidden;padding-left:4px;line-height:24px;"></div>
<div class="ar" style="left:342px;top:514px;width:59px;height:22px;background:#eef3e8;overflow:hidden;padding-left:4px;line-height:22px;"></div>
<div class="t" style="left:402px;top:514px;width:58px;height:22px;background:#fff;overflow:hidden;padding-left:4px;line-height:24px;"></div>
<div class="ar" style="left:461px;top:514px;width:87px;height:22px;background:#fff;overflow:hidden;text-align:right;padding-right:3px;line-height:22px;"></div>
<div class="t" style="left:549px;top:514px;width:179px;height:22px;background:#fff;overflow:hidden;padding-left:4px;line-height:24px;"></div>
<div class="t" style="left:729px;top:514px;width:59px;height:22px;background:#fff;overflow:hidden;padding-left:4px;line-height:24px;"></div>
<div class="t" style="left:789px;top:514px;width:59px;height:22px;background:#eef3e8;overflow:hidden;padding-left:4px;line-height:24px;"></div>
<div class="ar" style="left:849px;top:514px;width:59px;height:22px;background:#eef3e8;overflow:hidden;text-align:right;padding-right:3px;line-height:22px;"></div>
<div class="ar" style="left:909px;top:514px;width:59px;height:22px;background:#eef3e8;overflow:hidden;text-align:right;padding-right:3px;line-height:22px;"></div>
<div class="ar" style="left:12px;top:537px;width:48px;height:7px;background:#e0f0f8;overflow:hidden;color:#000080;text-align:center;line-height:7px;"></div>
<div class="ar" style="left:61px;top:537px;width:119px;height:7px;background:#f5ffff;overflow:hidden;padding-left:4px;line-height:7px;"></div>
<div class="t" style="left:181px;top:537px;width:160px;height:7px;background:#f5ffff;overflow:hidden;padding-left:4px;line-height:9px;"></div>
<div class="ar" style="left:342px;top:537px;width:59px;height:7px;background:#eef3e8;overflow:hidden;padding-left:4px;line-height:7px;"></div>
<div class="t" style="left:402px;top:537px;width:58px;height:7px;background:#f5ffff;overflow:hidden;padding-left:4px;line-height:9px;"></div>
<div class="ar" style="left:461px;top:537px;width:87px;height:7px;background:#f5ffff;overflow:hidden;text-align:right;padding-right:3px;line-height:7px;"></div>
<div class="t" style="left:549px;top:537px;width:179px;height:7px;background:#f5ffff;overflow:hidden;padding-left:4px;line-height:9px;"></div>
<div class="t" style="left:729px;top:537px;width:59px;height:7px;background:#f5ffff;overflow:hidden;padding-left:4px;line-height:9px;"></div>
<div class="t" style="left:789px;top:537px;width:59px;height:7px;background:#eef3e8;overflow:hidden;padding-left:4px;line-height:9px;"></div>
<div class="ar" style="left:849px;top:537px;width:59px;height:7px;background:#eef3e8;overflow:hidden;text-align:right;padding-right:3px;line-height:7px;"></div>
<div class="ar" style="left:909px;top:537px;width:59px;height:7px;background:#eef3e8;overflow:hidden;text-align:right;padding-right:3px;line-height:7px;"></div>
<div class="ar" style="left:12px;top:545px;width:48px;height:21px;background:#f5e6ee;line-height:22px;padding-left:4px;"></div>
<div class="t" style="left:61px;top:545px;width:119px;height:21px;background:#fff;line-height:22px;padding-left:4px;">合计 5</div>
<div class="ar" style="left:181px;top:545px;width:160px;height:21px;background:#fff;line-height:22px;padding-left:4px;"></div>
<div class="ar" style="left:342px;top:545px;width:59px;height:21px;background:#eef3e8;line-height:22px;padding-left:4px;"></div>
<div class="ar" style="left:402px;top:545px;width:58px;height:21px;background:#fff;line-height:22px;padding-left:4px;"></div>
<div class="ar" style="left:461px;top:545px;width:87px;height:21px;background:#fff;line-height:22px;text-align:right;padding-right:3px;">5</div>
<div class="ar" style="left:549px;top:545px;width:179px;height:21px;background:#fff;line-height:22px;padding-left:4px;"></div>
<div class="ar" style="left:729px;top:545px;width:59px;height:21px;background:#fff;line-height:22px;padding-left:4px;"></div>
<div class="ar" style="left:789px;top:545px;width:59px;height:21px;background:#eef3e8;line-height:22px;padding-left:4px;"></div>
<div class="ar" style="left:849px;top:545px;width:59px;height:21px;background:#eef3e8;line-height:22px;padding-left:4px;"></div>
<div class="ar" style="left:909px;top:545px;width:59px;height:21px;background:#eef3e8;line-height:22px;padding-left:4px;"></div>
<div style="left:33px;top:542px;width:6px;height:1px;background:#000080"></div>
<div style="left:11px;top:291px;width:1px;height:276px;background:#a5d2a5"></div>
<div style="left:60px;top:291px;width:1px;height:276px;background:#a5d2a5"></div>
<div style="left:180px;top:291px;width:1px;height:276px;background:#a5d2a5"></div>
<div style="left:341px;top:291px;width:1px;height:276px;background:#a5d2a5"></div>
<div style="left:401px;top:291px;width:1px;height:276px;background:#a5d2a5"></div>
<div style="left:460px;top:291px;width:1px;height:276px;background:#a5d2a5"></div>
<div style="left:548px;top:291px;width:1px;height:276px;background:#a5d2a5"></div>
<div style="left:728px;top:291px;width:1px;height:276px;background:#a5d2a5"></div>
<div style="left:788px;top:291px;width:1px;height:276px;background:#a5d2a5"></div>
<div style="left:848px;top:291px;width:1px;height:276px;background:#a5d2a5"></div>
<div style="left:908px;top:291px;width:1px;height:276px;background:#a5d2a5"></div>
<div style="left:968px;top:291px;width:1px;height:276px;background:#a5d2a5"></div>
<div style="left:11px;top:330px;width:958px;height:1px;background:#a5d2a5"></div>
<div style="left:11px;top:370px;width:958px;height:1px;background:#a5d2a5"></div>
<div style="left:11px;top:393px;width:958px;height:1px;background:#a5d2a5"></div>
<div style="left:11px;top:433px;width:958px;height:1px;background:#a5d2a5"></div>
<div style="left:11px;top:473px;width:958px;height:1px;background:#a5d2a5"></div>
<div style="left:11px;top:513px;width:958px;height:1px;background:#a5d2a5"></div>
<div style="left:11px;top:536px;width:958px;height:1px;background:#a5d2a5"></div>
<div style="left:11px;top:544px;width:958px;height:1px;background:#a5d2a5"></div>
<div style="left:11px;top:566px;width:958px;height:1px;background:#a5d2a5"></div>
<div style="left:11px;top:291px;width:958px;height:1px;background:#a5d2a5"></div>
<div style="left:1335px;top:291px;width:16px;height:253px;background:#f0f0f0"></div>
<div style="left:1335px;top:308px;width:15px;height:17px;background:#cdcdcd"></div>
<svg style="left:1338px;top:296px" width="10" height="7" viewBox="0 0 10 7"><path d="M1 6l4-4 4 4" fill="none" stroke="#505050" stroke-width="1.800"/></svg>
<svg style="left:1338px;top:532px" width="10" height="7" viewBox="0 0 10 7"><path d="M1 1l4 4 4-4" fill="none" stroke="#505050" stroke-width="1.800"/></svg>
<div class="t" style="left:19.5px;top:594.0px;height:16px;line-height:16px;">业务部门</div>
<div class="in" style="left:78px;top:589px;width:105px;height:22px;"></div>
<div class="t" style="left:81px;top:593.0px;height:16px;line-height:16px;">生产部</div>
<div class="t" style="left:190.5px;top:594.0px;height:16px;line-height:16px;">业务员</div>
<div class="in" style="left:235px;top:589px;width:87px;height:22px;"></div>
<div class="t" style="left:238px;top:593.0px;height:16px;line-height:16px;">赵志光</div>
<div class="t" style="left:329px;top:595.0px;height:16px;line-height:16px;color:#808080;letter-spacing:0">...</div>
<div class="t" style="left:359.5px;top:594.0px;height:16px;line-height:16px;">制单人</div>
<div class="t rd" style="left:416px;top:594.0px;height:16px;line-height:16px;">系统管理员</div>
<div class="ar" style="left:498px;top:593.0px;height:16px;line-height:16px;color:#1a8a9c">2017-04-25</div>
<div class="t" style="left:580px;top:594.0px;height:16px;line-height:16px;">审核员</div>
<div class="t rd" style="left:630px;top:594.0px;height:16px;line-height:16px;">系统管理员</div>
<div class="ar" style="left:709px;top:593.0px;height:16px;line-height:16px;color:#1a8a9c">2017-04-25</div>
<div class="t" style="left:19.5px;top:620.0px;height:16px;line-height:16px;">备</div>
<div class="t" style="left:55.5px;top:620.0px;height:16px;line-height:16px;">注</div>
<div class="in" style="left:78px;top:615px;width:693px;height:21px;"></div>
<div style="left:754px;top:617px;width:16px;height:18px;background:#f4f4f4"></div>
<svg style="left:757px;top:619px" width="10" height="14" viewBox="0 0 10 14"><path d="M1.500 5l3.500-3.500 3.500 3.500M1.500 9l3.500 3.500 3.500-3.500" fill="none" stroke="#b8b8b8" stroke-width="1.500"/></svg>
<svg style="left:19.500px;top:642.500px" width="14" height="17" viewBox="0 0 14 17"><path d="M.7.700H10.200L13 3.500V15.800H.700z" fill="#fff" stroke="#000" stroke-width="1.300"/><path d="M10.200.700V3.500H13" fill="none" stroke="#000" stroke-width="1"/><path d="M4.200 8.500c-.8-2.200 1-4 3.300-3.600M9.300 8c.8 2.200-1 4-3.300 3.600" fill="none" stroke="#008000" stroke-width="1.700"/><path d="M7 2.600l3 2.300-3 2.300zM6.500 9.300l-3 2.300 3 2.300z" fill="#008000"/></svg>
<div class="t" style="left:40.5px;top:645.0px;height:16px;line-height:16px;color:#0000ff">业务信息</div>
<div class="t" style="left:96px;top:645.0px;height:16px;line-height:16px;color:#008000">库存~~</div>
<div class="t" style="left:160.5px;top:645.0px;height:16px;line-height:16px;">业务量</div>
<div class="t" style="left:346.5px;top:645.0px;height:16px;line-height:16px;">虚拟库影响</div>
<div style="left:464px;top:644px;width:54px;height:15px;background:#a9c8f0"></div>
<div class="t" style="left:472.5px;top:644.5px;height:16px;line-height:16px;color:#800000;letter-spacing:.6px">创建=&gt;</div>
<div class="t rd" style="left:518px;top:645.0px;height:16px;line-height:16px;">领料单</div>
<div class="t rd" style="left:560px;top:645.0px;height:16px;line-height:16px;">产成入库单</div>
<div class="t rd" style="left:632px;top:645.0px;height:16px;line-height:16px;">可引用</div>
<div style="left:10px;top:667px;width:301px;height:23px;background:#eceeec;border:1px solid;border-color:#a0a0a0 #fff #fff #a0a0a0"></div>
<div style="left:313px;top:667px;width:1038px;height:23px;background:#eceeec;border:1px solid;border-color:#a0a0a0 #fff #fff #a0a0a0"></div>
<div class="t" style="left:15px;top:670.5px;height:16px;line-height:16px;">提示： 按F5键选择产品，F3键显示单据列表</div>
<div style="left:0px;top:703px;width:1366px;height:25px;background:#f0ffff"></div>
<div style="left:3px;top:703px;width:75px;height:25px;background:#fff;color:#0000ff;text-align:center;line-height:26px;white-space:nowrap"><u>0</u>广州锐速智</div>
<div style="left:79px;top:703px;width:75px;height:25px;background:#fff;color:#0000ff;text-align:center;line-height:26px;white-space:nowrap"><u>1</u>产品资料管</div>
<div style="left:155px;top:703px;width:75px;height:25px;background:#fff;color:#0000ff;text-align:center;line-height:26px;white-space:nowrap"><u>2</u>产品定义</div>
<div style="left:231px;top:703px;width:75px;height:25px;background:#fff;color:#ff00cc;text-align:center;line-height:26px;white-space:nowrap"><u>3</u>生产单</div>
<div style="left:854px;top:707px;width:307px;height:20px;background:#fff0f0"></div>
<div class="t" style="left:1086px;top:710.5px;height:16px;line-height:16px;color:#800080">玲珑面板顶盖</div>
<div class="t" style="left:1171px;top:709.5px;height:16px;line-height:16px;color:#8fa8cc">导航F4</div>
<div class="ar" style="left:1215px;top:708.5px;height:16px;line-height:16px;color:#800000">2016-09-15</div>
<div class="ar" style="left:1293.5px;top:708.5px;height:16px;line-height:16px;color:#800000">admin</div>
<div style="left:0px;top:728px;width:1366px;height:40px;background:#030618"></div>
<div style="left:48px;top:728px;width:344px;height:40px;background:#333"></div>
<div style="left:590px;top:728px;width:48px;height:40px;background:#363a48"></div>
<div style="left:1100px;top:728px;width:262px;height:5px;background:#0c0c0e"></div>
<div style="left:1117px;top:728px;width:244px;height:5px;background:#141416"></div>
<svg style="left:16px;top:740px" width="16" height="16" viewBox="0 0 16 16"><path d="M0 2.300l6.500-.9v6.200H0zM7.300 1.300L16 0v7.600H7.300zM0 8.400h6.500v6.200L0 13.700zM7.300 8.400H16V16l-8.700-1.300z" fill="#fff"/></svg>
<div style="left:57px;top:737px;width:22px;height:22px;border:3px solid #f4f4f4;border-radius:50%;box-shadow:0 0 1px #ccc"></div>
<div class="t" style="left:84px;top:739.0px;height:20px;line-height:20px;color:#a8a8a8;font-size:14px">在这里输入你要搜索的内容</div>
<svg style="left:365px;top:739px" width="13" height="18" viewBox="0 0 13 18"><rect x="4" y="1" width="5" height="10" rx="2.500" fill="none" stroke="#bbb" stroke-width="1.200"/><path d="M1.500 8v1.500a5 5 0 0 0 10 0V8M6.500 14.500v2.500M4 17h5" fill="none" stroke="#bbb" stroke-width="1.200"/></svg>
<svg style="left:405px;top:740px" width="22" height="16" viewBox="0 0 22 16"><rect x="5.700" y="1.500" width="11" height="13" fill="none" stroke="#fff" stroke-width="1.400"/><path d="M3.500 3.500h-2v9h2M18.500 3.500h2v9h-2" fill="none" stroke="#fff" stroke-width="1.300"/></svg>
<div style="left:447px;top:766px;width:40px;height:2px;background:#76b9ed"></div>
<div style="left:496px;top:766px;width:40px;height:2px;background:#76b9ed"></div>
<div style="left:545px;top:766px;width:40px;height:2px;background:#76b9ed"></div>
<div style="left:590px;top:766px;width:48px;height:2px;background:#76b9ed"></div>
<div style="left:643px;top:766px;width:40px;height:2px;background:#76b9ed"></div>
<div style="left:692px;top:766px;width:40px;height:2px;background:#76b9ed"></div>
<div style="left:741px;top:766px;width:40px;height:2px;background:#76b9ed"></div>
<svg style="left:455px;top:738px" width="24" height="20" viewBox="0 0 24 20"><path d="M1 2.500c0-.8.500-1.300 1.300-1.300h6l1.500 1.800H21c.8 0 1.300.5 1.300 1.300V17c0 .8-.5 1.300-1.300 1.300H2.300C1.500 18.300 1 17.800 1 17z" fill="#f5cf6a"/><path d="M1 5.500h21.300V17c0 .8-.5 1.300-1.300 1.300H2.300C1.500 18.300 1 17.800 1 17z" fill="#ffe69c"/><path d="M2 1.800h6.500" stroke="#8fd0f0" stroke-width="1"/><path d="M5.500 18.300v-7.300h12v7.300h-3.500v-4h-5v4z" fill="#3fb0f0"/></svg>
<svg style="left:503px;top:735px" width="26" height="26" viewBox="0 0 26 26"><defs><radialGradient id="g360" cx=".45" cy=".3" r=".75"><stop offset="0" stop-color="#96ea3c"/><stop offset=".6" stop-color="#5cc41c"/><stop offset="1" stop-color="#44a80e"/></radialGradient></defs><path d="M7.700 24.300C1.500 19.500 3 9.500 14 4.500c3-1.400 6-2.300 8.700-2.200" fill="none" stroke="#5ac81e" stroke-width="1.300"/><circle cx="13" cy="12.800" r="10.800" fill="#eef4ea"/><circle cx="13" cy="12.800" r="9.500" fill="url(#g360)"/><path d="M9.600 11.500a3.300 4.100 0 0 1 6.600 0z" fill="#fff"/><path d="M9.200 14.400h7.300a3.650 2.900 0 0 1-7.300 0z" fill="#fff"/><path d="M6.600 14.200H22" stroke="#fff" stroke-width=".8"/><path d="M5 14c1.500-4 4.500-7.500 9-9.500" fill="none" stroke="#b4f476" stroke-width=".8"/></svg>
<svg style="left:552px;top:735px" width="25" height="24" viewBox="0 0 25 24"><path d="M1.400 20.600V5c0-2.200 1.600-3.800 3.800-3.800H21V20.600z" fill="#d6e3d0" stroke="#6cc23c" stroke-width="1"/><path d="M3 19V6c0-1.800 1-3 3-3h13v5" fill="#e9efe5"/><path d="M4.900 6L23.900 7.100 23.200 22.800 2.700 20.300z" fill="#f3f7ef" stroke="#dfe8d8" stroke-width=".6"/><g fill="#62a852"><path d="M17.700 8.300l5.100.4-.1 2.500-5.100-.5z"/><path d="M17.500 12.600l5.100.6-.1 2.800-5.100-.7z" fill="#4f9a40"/><path d="M17.300 17.200l5.100.7-.1 2.600-5.100-.8z"/><path d="M11 16l4.900.6-.2 2.900-4.900-.7z" fill="#7ab86a"/><path d="M5.300 15.500l4 .5-.3 2.700-4-.6z" fill="#7ab86a"/></g><path d="M15.500 7.800L7.100 14.200" stroke="#6aa85a" stroke-width="2.400"/><path d="M6.700 7.800l8.400 6.600" stroke="#2a741c" stroke-width="2.700"/></svg>
<svg style="left:602px;top:734px" width="26" height="28" viewBox="0 0 26 28"><path d="M8.500 10.600H14.700M10.700 10.600V18H13.600" fill="none" stroke="#a0a0a0" stroke-width="1"/><g stroke="#111" stroke-width=".8" stroke-linejoin="round"><path d="M7.800 3l3.600 4-6.600 6.600L1.200 9.500z" fill="#ffff00"/><path d="M11.400 7l-6.600 6.600-1.200-1.300 6.600-6.600z" fill="#b4b400" stroke="none"/><path d="M19.500 5.900l2.900 3.300-4.800 5.100L14.700 11z" fill="#ff00ff"/><path d="M22.400 9.200l-4.800 5.100-1.450-1.650 4.800-5.100z" fill="#a80028" stroke="none"/><path d="M17.300 16.900l2.500 2.900-5.100 4.700-2.900-2.900z" fill="#00ffff"/><path d="M19.800 19.800l-5.100 4.700-1.450-1.450 5.100-4.700z" fill="#00a0a0" stroke="none"/></g></svg>
<svg style="left:651px;top:736px" width="24" height="24" viewBox="0 0 24 24"><rect x="0" y="0" width="24" height="24" rx="2" fill="#0a7abf"/><g transform="translate(12,12)"><g fill="#fff"><circle r="7.200"/><g id="gt"><rect x="-2.200" y="-10" width="4.400" height="20" rx=".8"/></g><use href="#gt" transform="rotate(45)"/><use href="#gt" transform="rotate(90)"/><use href="#gt" transform="rotate(135)"/></g><circle r="5" fill="#0a7abf"/><circle r="4" fill="#fff" opacity=".25"/><text x="0" y="3.800" text-anchor="middle" font-family="Liberation Sans,sans-serif" font-weight="bold" font-size="10" fill="#fff">?</text></g></svg>
<svg style="left:699px;top:735px" width="27" height="26" viewBox="0 0 27 26"><defs><linearGradient id="gpal" x1="0" y1="0" x2="1" y2="1"><stop offset="0" stop-color="#e2f0fa"/><stop offset="1" stop-color="#a4c8e4"/></linearGradient></defs><path d="M1 15.500C1 9.500 7 4.800 13.500 4.800c5.500 0 9.700 3 9.700 8 0 5.500-5 10.400-11.500 10.400-2.500 0-4.500-1-5-2.800-.3-1.200.6-2.200-.2-2.700-1.200-.7-3 1.800-4.500 1C1.300 18.200 1 17 1 15.500z" fill="url(#gpal)" stroke="#9cc0dc" stroke-width=".7"/><circle cx="11.100" cy="15.900" r="1.500" fill="#0a1222"/><ellipse cx="4.900" cy="14.200" rx="1.900" ry="1.700" fill="#e8483a"/><ellipse cx="8.800" cy="10.400" rx="1.900" ry="1.700" fill="#5cc038"/><ellipse cx="13.300" cy="8.500" rx="2" ry="1.700" fill="#f8b020"/><path d="M11.900 24.800L19.300 7.500l1.500.6L13 25z" fill="#f08a28" stroke="#c06810" stroke-width=".5"/><path d="M19.300 7.500l.9-2.300 1.500.6-.9 2.300z" fill="#a0a4a8"/><path d="M20.200 5.200c-1-1.600-.9-2.800-.5-3.500 2 .2 4.200 1.300 5.300 2.800-1.300 0-2.600.4-3.300 1.300z" fill="#e8b878" stroke="#c09050" stroke-width=".4"/></svg>
<svg style="left:749px;top:735px" width="24" height="25" viewBox="0 0 24 25"><rect x="2.900" y="12.200" width="19.400" height="11.300" fill="#c0c0c0" stroke="#6a6a6a" stroke-width=".8"/><rect x="10.900" y="10.200" width="10" height="1.900" fill="#000080"/><path d="M4 17h6.500M4 19.900h6.500M4 21.800h6.500" stroke="#000" stroke-width="1.100" stroke-dasharray="2.200 1.300"/><circle cx="16.800" cy="18" r="4.300" fill="#f00000" stroke="#222" stroke-width=".6"/><path d="M16.800 18l-2.600-3.400a4.300 4.300 0 0 1 5.800.5z" fill="#00e0e0"/><path d="M16.800 18l3.200-2.900a4.300 4.300 0 0 1 1 2z" fill="#00c000"/><path d="M16.800 18l4.200-.9a4.300 4.300 0 0 1-2 4.700z" fill="#ff00ff"/><path d="M1.500 3.500l4-2.500 1.500.5 4 .8 2 4-1 3.500-3 2.700-.2 2.500-3.300.5-.5-3.500L.800 9.500l1-2.500z" fill="#fff" stroke="#111" stroke-width=".7"/><circle cx="8.700" cy="8.900" r="2.700" fill="#fff" stroke="#000" stroke-width="1.100"/><path d="M6.500 1.500l.5-1.200" stroke="#fff" stroke-width="1"/><path d="M6 13.500c2 0 3.500 1 3.500 2.500" fill="none" stroke="#000" stroke-width="1"/></svg>
<svg style="left:1115px;top:743px" width="14" height="9" viewBox="0 0 14 9"><path d="M1 8l6-6 6 6" fill="none" stroke="#fff" stroke-width="1.300"/></svg>
<svg style="left:1137px;top:741px" width="19" height="13" viewBox="0 0 19 13"><path d="M2 .8v3.300M4.400 .8v3.300M1.200 4.100h4v2.200a2 1.500 0 0 1-4 0zM3.200 7.800v3.700h1.800" fill="none" stroke="#fff" stroke-width="1.100"/><rect x="5" y="3.100" width="11.400" height="8.400" fill="none" stroke="#fff" stroke-width="1.100"/><rect x="16.400" y="5.500" width="1.200" height="3.500" fill="#fff"/><path d="M6.300 10.300V7.500l1.500-1.500h7.300v4.300z" fill="#fff"/></svg>
<svg style="left:1161px;top:741px" width="17" height="14" viewBox="0 0 17 14"><path d="M1 4.500h2.500L7 1v12L3.500 9.500H1z" fill="none" stroke="#fff" stroke-width="1.100" stroke-linejoin="round"/><path d="M10 4.500l5 5M15 4.500l-5 5" stroke="#fff" stroke-width="1.100"/></svg>
<svg style="left:1185px;top:740px" width="16" height="16" viewBox="0 0 16 16"><circle cx="8" cy="8" r="7.400" fill="#8a8f99"/><path d="M4.800 4.800l6.400 6.400M11.200 4.800l-6.400 6.400" stroke="#1a1d2a" stroke-width="1.700"/></svg>
<svg style="left:1212px;top:738px" width="20" height="20" viewBox="0 0 20 20"><g transform="rotate(-14 10 10)"><rect x="3" y="3.200" width="14.600" height="13.800" rx="2" fill="#f2480e"/><path d="M14.800 6.600c-2-1.200-7.300-1.400-7.700.9-.4 2.400 7.600 1.500 7.300 4.200-.3 2.300-5.800 2-8.400.5" fill="none" stroke="#fff" stroke-width="2.300" stroke-linecap="round"/></g></svg>
<div class="ar" style="left:1262px;top:730.5px;height:16px;line-height:16px;color:#fff;letter-spacing:.2px">17:46</div>
<div class="ar" style="left:1247.5px;top:751.0px;height:16px;line-height:16px;color:#fff;letter-spacing:.45px">2017/4/25</div>
<svg style="left:1324px;top:739px" width="18" height="18" viewBox="0 0 18 18"><path d="M1.500 1.500h15v11h-5.500l-2.500 2.800-2.500-2.800h-4.500z" fill="none" stroke="#fff" stroke-width="1.200"/></svg>
<div style="left:1361px;top:728px;width:1px;height:40px;background:#8a8a8a"></div>
</body></html>
